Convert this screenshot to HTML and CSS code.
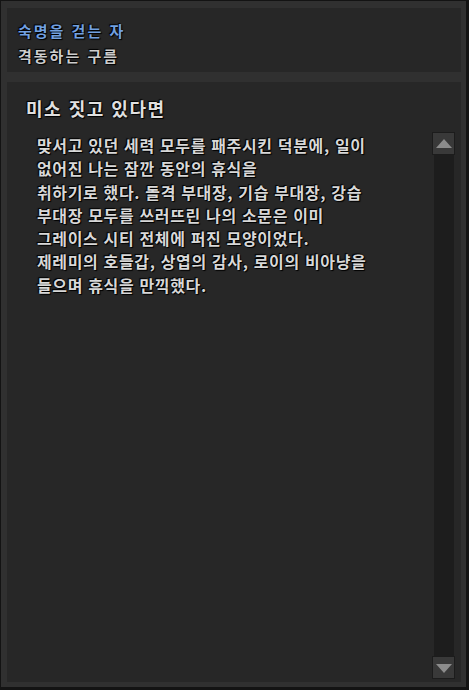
FILE: index.html
```html
<!DOCTYPE html>
<html lang="ko">
<head>
<meta charset="utf-8">
<link rel="stylesheet" href="styles.css">
</head>
<body>
<div class="frame">
  <section class="header-panel">
    <div class="quest-title">숙명을 걷는 자</div>
    <div class="quest-sub">격동하는 구름</div>
  </section>
  <section class="story-panel">
    <h1 class="story-heading">미소 짓고 있다면</h1>
    <div class="story-body">
      <p class="story-text">맞서고 있던 세력 모두를 패주시킨 덕분에, 일이<br>없어진 나는 잠깐 동안의 휴식을<br>취하기로 했다. 돌격 부대장, 기습 부대장, 강습<br>부대장 모두를 쓰러뜨린 나의 소문은 이미<br>그레이스 시티 전체에 퍼진 모양이었다.<br>제레미의 호들갑, 상엽의 감사, 로이의 비아냥을<br>들으며 휴식을 만끽했다.</p>
      <div class="scrollbar">
        <div class="scroll-btn"><span class="tri tri-up"></span></div>
        <div class="scroll-track"></div>
        <div class="scroll-btn"><span class="tri tri-down"></span></div>
      </div>
    </div>
  </section>
</div>
</body>
</html>
```
FILE: styles.css
```css
html, body {
  margin: 0;
  padding: 0;
  background: #131313;
}
body {
  width: 469px;
  height: 690px;
  overflow: hidden;
  font-family: "Noto Sans CJK KR", "Noto Sans", sans-serif;
}
.frame {
  margin: 1px 3px 3px 1px;
  height: 686px;
  box-sizing: border-box;
  background: #303030;
  padding: 7px 5px 5px 6px;
  display: flex;
  flex-direction: column;
  gap: 10px;
}
.header-panel {
  height: 64px;
  background: #272727;
  box-sizing: border-box;
  padding: 10px 0 0 11px;
}
.quest-title,
.quest-sub {
  font-size: 15px;
  font-weight: 700;
  letter-spacing: 2px;
  line-height: 25px;
  text-shadow: 0 0 1px #000, 1px 1px 1px #000, -1px -1px 1px #000;
}
.quest-title {
  color: #72a0e0;
}
.quest-sub {
  color: #cdcdcd;
}
.story-panel {
  flex: 1;
  background: #272727;
  display: flex;
  flex-direction: column;
  padding: 0 6px 3px 0;
  min-height: 0;
}
.story-heading {
  margin: 0;
  font-size: 18px;
  font-weight: 700;
  letter-spacing: 1.5px;
  line-height: 24px;
  color: #e0e0e0;
  padding: 14px 0 0 19px;
  height: 50px;
  box-sizing: border-box;
  text-shadow: 0 0 1px #000, 1px 1px 1px #000, -1px -1px 1px #000;
}
.story-body {
  flex: 1;
  display: flex;
  min-height: 0;
}
.story-text {
  flex: 1;
  margin: 0;
  padding: 2px 0 0 30px;
  font-size: 16px;
  font-weight: 700;
  letter-spacing: 0.65px;
  line-height: 23.3px;
  color: #d8d8d8;
  text-shadow: 0 0 1px #000, 1px 1px 1px #000, -1px -1px 1px #000;
}
.scrollbar {
  width: 23px;
  display: flex;
  flex-direction: column;
  align-items: center;
}
.scroll-btn {
  width: 23px;
  height: 23px;
  box-sizing: border-box;
  background: #393939;
  border: 1px solid #1c1c1c;
  display: flex;
  align-items: center;
  justify-content: center;
}
.scroll-track {
  flex: 1;
  width: 20px;
  background: #1d1d1d;
}
.tri {
  width: 0;
  height: 0;
  border-left: 8px solid transparent;
  border-right: 8px solid transparent;
}
.tri-up {
  border-bottom: 9px solid #8c8c8c;
  margin-top: -1px;
}
.tri-down {
  border-top: 9px solid #8c8c8c;
  margin-top: 1px;
}
```
